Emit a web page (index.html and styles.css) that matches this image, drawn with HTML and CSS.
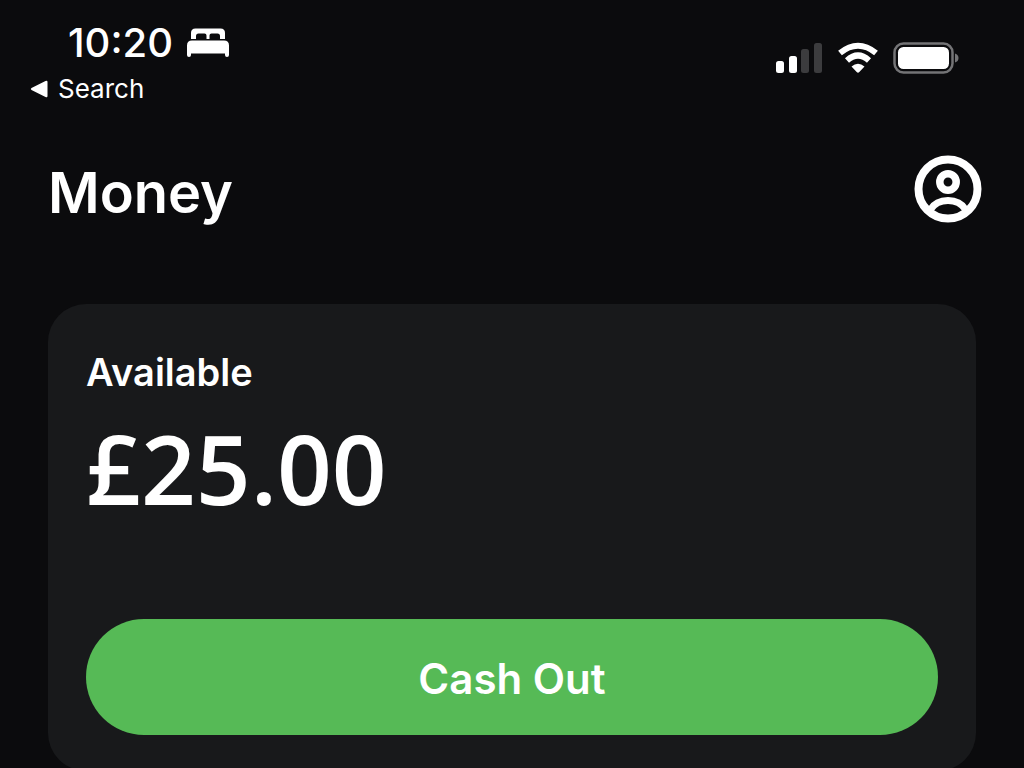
FILE: index.html
```html
<!DOCTYPE html>
<html lang="en">
<head>
    <meta charset="UTF-8">
    <meta name="viewport" content="width=device-width, initial-scale=1.0">
    <title>Money</title>
    <link rel="stylesheet" href="styles.css">
</head>
<body>
    <div class="status-bar">
        <div class="status-left">
            <div class="clock">
                <span>10:20</span>
                <svg class="icon-bed" width="42" height="30" viewBox="0 0 42 30" fill="#fff" aria-hidden="true">
                    <path d="M4 11V5Q4 0.500 8.500 0.500H33.500Q38 0.500 38 5V11H33V8Q33 5.500 30.500 5.500H24.500Q22.500 5.500 22.500 7.500V11H19.500V7.500Q19.500 5.500 17.500 5.500H11.500Q9 5.500 9 8V11Z"/>
                    <path d="M5 12.500H37Q42 12.500 42 17.500V27Q42 29 40 29Q38 29 38 27V25.500H4V27Q4 29 2 29Q0 29 0 27V17.500Q0 12.500 5 12.500Z"/>
                </svg>
            </div>
            <a class="back-link" href="#">
                <svg width="18" height="18" viewBox="0 0 18 18" fill="#fff" aria-hidden="true">
                    <path d="M1.500 8L15.500 1Q17.500 0 17.500 2V16Q17.500 18 15.500 17L1.500 10Q0 9 1.500 8Z"/>
                </svg>
                <span>Search</span>
            </a>
        </div>
        <div class="status-right">
            <svg width="48" height="32" viewBox="0 0 48 32" aria-hidden="true">
                <rect x="1" y="19" width="8" height="12" rx="2.500" fill="#fff"/>
                <rect x="14" y="14" width="8" height="17" rx="2.500" fill="#fff"/>
                <rect x="26" y="7" width="8" height="24" rx="2.500" fill="#3c3c3e"/>
                <rect x="39" y="1" width="8" height="30" rx="2.500" fill="#3c3c3e"/>
            </svg>
            <svg width="42" height="32" viewBox="0 0 42 32" aria-hidden="true">
                <path d="M3 11Q21 -3.500 39 11" fill="none" stroke="#fff" stroke-width="6"/>
                <path d="M10 18.500Q21 8.500 32 18.500" fill="none" stroke="#fff" stroke-width="6"/>
                <path d="M14.500 24.500Q21 19 27.500 24.500L22.300 30Q21 31.500 19.700 30Z" fill="#fff"/>
            </svg>
            <svg width="66" height="32" viewBox="0 0 66 32" aria-hidden="true">
                <rect x="1.500" y="1.500" width="58" height="29" rx="9" fill="none" stroke="#747476" stroke-width="2.500"/>
                <rect x="5" y="5" width="51" height="22" rx="5.500" fill="#fff"/>
                <path d="M62 11.500Q65.500 12.500 65.500 16Q65.500 19.500 62 20.500Z" fill="#747476"/>
            </svg>
        </div>
    </div>

    <header class="page-header">
        <h1>Money</h1>
        <button class="profile-button" type="button" aria-label="Profile">
            <svg width="68" height="68" viewBox="0 0 68 68" fill="none" stroke="#fff" aria-hidden="true">
                <circle cx="34" cy="34" r="29.500" stroke-width="8"/>
                <circle cx="34" cy="27" r="8.200" stroke-width="7.500"/>
                <path d="M16.500 54.500C24 42.500 44 42.500 51.500 54.500" stroke-width="7"/>
            </svg>
        </button>
    </header>

    <main class="card">
        <h2>Available</h2>
        <p class="balance">£25.00</p>
        <button class="cash-out" type="button">Cash Out</button>
    </main>
</body>
</html>
```

FILE: styles.css
```css
body {
    font-family: Inter, "Liberation Sans", sans-serif;
    background-color: #0b0b0d;
    color: #fff;
    margin: 0;
}

h1, h2, p {
    margin: 0;
}

button {
    font-family: inherit;
    color: inherit;
    border: none;
    cursor: pointer;
}

svg {
    display: block;
}

.status-bar {
    display: flex;
    justify-content: space-between;
    align-items: flex-start;
    padding: 20px 65px 0 30px;
}

.clock {
    display: flex;
    align-items: center;
    gap: 14px;
    padding-left: 38px;
    font-size: 40px;
    font-weight: 500;
    line-height: 46px;
}

.back-link {
    display: flex;
    align-items: center;
    gap: 10px;
    color: #fff;
    font-size: 26px;
    line-height: 46px;
    text-decoration: none;
}

.status-right {
    display: flex;
    gap: 14px;
    padding-top: 22px;
}

.page-header {
    display: flex;
    justify-content: space-between;
    align-items: flex-start;
    padding: 43px 42px 0 48px;
}

.page-header h1 {
    padding-top: 2px;
    font-size: 56px;
    font-weight: 600;
    line-height: 72px;
}

.profile-button {
    padding: 0;
    background: none;
}

.card {
    margin: 75px 48px 0;
    padding: 41px 38px 36px;
    background-color: #18191b;
    border-radius: 38px;
}

.card h2 {
    font-size: 38px;
    font-weight: 600;
    line-height: 54px;
}

.balance {
    font-family: "Open Sans", "Noto Sans", sans-serif;
    font-size: 96px;
    font-weight: 600;
    line-height: 138px;
}

.cash-out {
    display: block;
    width: 100%;
    margin-top: 82px;
    padding: 32px 30px 28px;
    background-color: #56ba56;
    border-radius: 58px;
    font-size: 42px;
    font-weight: 600;
    line-height: 56px;
}
```
